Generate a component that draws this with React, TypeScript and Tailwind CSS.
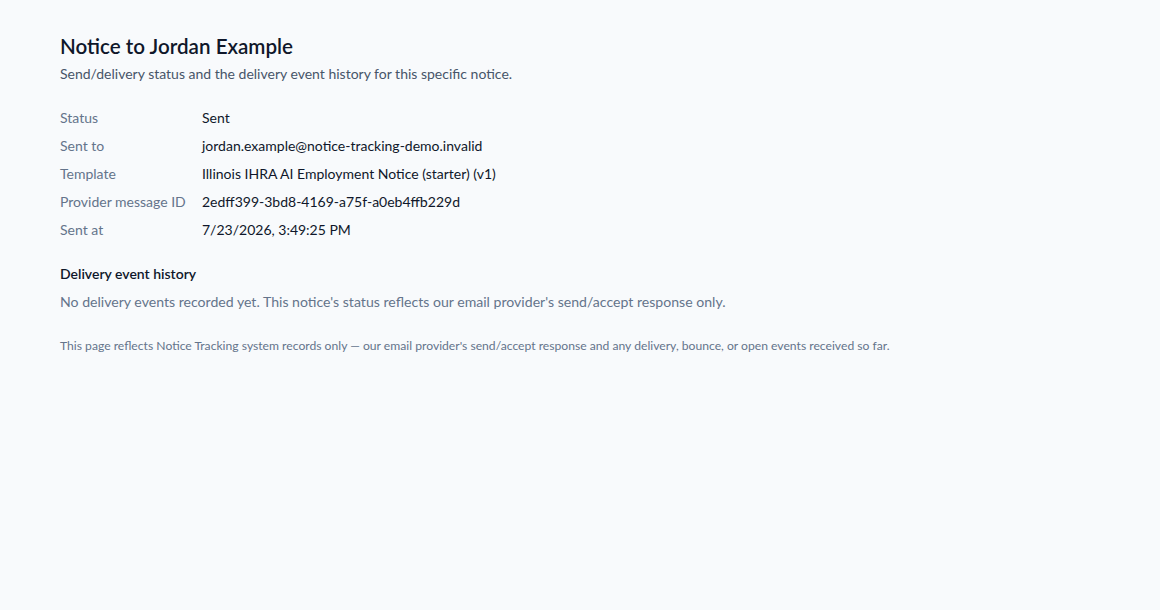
const rows: [string, string][] = [
  ['Status', 'Sent'],
  ['Sent to', 'jordan.example@notice-tracking-demo.invalid'],
  ['Template', 'Illinois IHRA AI Employment Notice (starter) (v1)'],
  ['Provider message ID', '2edff399-3bd8-4169-a75f-a0eb4ffb229d'],
  ['Sent at', '7/23/2026, 3:49:25 PM'],
];

export default function App() {
  return (
    <div
      className="min-h-[610px] bg-[#f8fafc] px-[60px] pt-[33px]"
      style={{ fontFamily: 'Lato, "Noto Sans", sans-serif' }}
    >
      <h1 className="text-[20.6px] leading-[26px] font-semibold text-[#0f172a]">Notice to Jordan Example</h1>
      <p className="mt-[5px] text-[14px] leading-[20px] text-[#475569]">
        Send/delivery status and the delivery event history for this specific notice.
      </p>

      <div className="mt-[19px] flex flex-col">
        {rows.map(([label, value]) => (
          <div key={label} className="flex h-[28px] items-center text-[14px]">
            <div className="w-[142px] text-[#64748b]">{label}</div>
            <div className="text-[#0f172a]">{value}</div>
          </div>
        ))}
      </div>

      <h2 className="mt-[21px] text-[14px] leading-[20px] font-semibold text-[#0f172a]">Delivery event history</h2>
      <p className="mt-[8px] text-[14.1px] leading-[20px] text-[#64748b]">
        No delivery events recorded yet. This notice's status reflects our email provider's send/accept response only.
      </p>

      <p className="mt-[26px] text-[12.15px] leading-[16px] text-[#64748b]">
        This page reflects Notice Tracking system records only — our email provider's send/accept response and any delivery, bounce, or open events received so far.
      </p>
    </div>
  );
}
